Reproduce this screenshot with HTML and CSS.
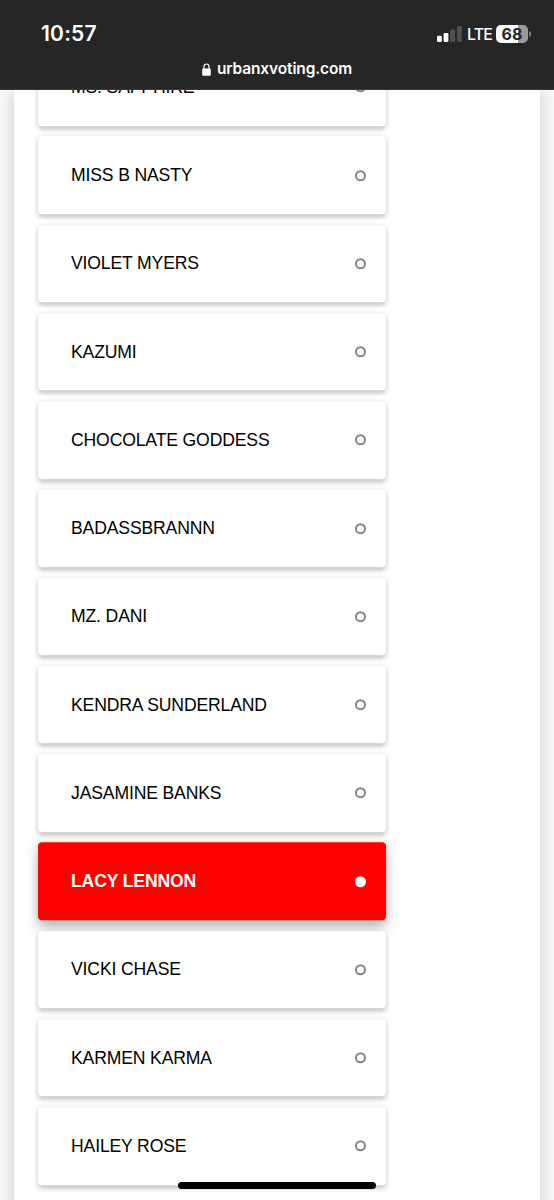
FILE: index.html
```html
<!DOCTYPE html>
<html lang="en">
<head>
<meta charset="utf-8">
<title>urbanxvoting.com</title>
<link rel="stylesheet" href="styles.css">
</head>
<body>
<div class="screen">
  <header class="browser-bar">
    <div class="status">
      <span class="time">10:57</span>
      <div class="indicators">
        <svg class="signal" width="25" height="16" viewBox="0 0 25 16"><rect x="0" y="9.7" width="4.8" height="6.3" rx="1.2" fill="#fff"/><rect x="6.6" y="7" width="4.8" height="9" rx="1.2" fill="#fff"/><rect x="13.2" y="3.5" width="4.8" height="12.5" rx="1.2" fill="#505050"/><rect x="20" y="0" width="4.8" height="16" rx="1.2" fill="#505050"/></svg>
        <span class="network">LTE</span>
        <span class="battery">68</span>
        <span class="battery-tip"></span>
      </div>
    </div>
    <div class="address">
      <svg class="lock" width="9" height="13" viewBox="0 0 9 13"><path d="M2 6V3.5a2.5 2.5 0 0 1 5 0V6" fill="none" stroke="#fff" stroke-width="1.2"/><rect x="0.2" y="5.5" width="8.6" height="7.2" rx="1.3" fill="#fff"/></svg>
      <span class="domain">urbanxvoting.com</span>
    </div>
  </header>
  <main class="page">
    <section class="panel">
      <ul class="choices">
        <li class="choice"><span class="name">MS. SAPPHIRE</span><span class="radio"></span></li>
        <li class="choice"><span class="name">MISS B NASTY</span><span class="radio"></span></li>
        <li class="choice"><span class="name">VIOLET MYERS</span><span class="radio"></span></li>
        <li class="choice"><span class="name">KAZUMI</span><span class="radio"></span></li>
        <li class="choice"><span class="name">CHOCOLATE GODDESS</span><span class="radio"></span></li>
        <li class="choice"><span class="name">BADASSBRANNN</span><span class="radio"></span></li>
        <li class="choice"><span class="name">MZ. DANI</span><span class="radio"></span></li>
        <li class="choice"><span class="name">KENDRA SUNDERLAND</span><span class="radio"></span></li>
        <li class="choice"><span class="name">JASAMINE BANKS</span><span class="radio"></span></li>
        <li class="choice selected"><span class="name">LACY LENNON</span><span class="radio"></span></li>
        <li class="choice"><span class="name">VICKI CHASE</span><span class="radio"></span></li>
        <li class="choice"><span class="name">KARMEN KARMA</span><span class="radio"></span></li>
        <li class="choice"><span class="name">HAILEY ROSE</span><span class="radio"></span></li>
      </ul>
    </section>
  </main>
  <div class="home-indicator"></div>
</div>
</body>
</html>
```
FILE: styles.css
```css
* { box-sizing: border-box; }
body { margin: 0; background: #fff; }
.screen {
  position: relative;
  display: flex;
  flex-direction: column;
  width: 554px;
  height: 1200px;
  overflow: hidden;
}
.browser-bar {
  flex: none;
  height: 90px;
  padding-top: 22px;
  background: #262626;
  border-bottom: 1px solid #3a3a3a;
  color: #fff;
  font-family: Inter, sans-serif;
}
.status {
  display: flex;
  align-items: center;
  justify-content: space-between;
  height: 23px;
  padding: 0 23px 0 41px;
}
.time { font-size: 21px; font-weight: 600; line-height: 23px; letter-spacing: 0.2px; }
.indicators { display: flex; align-items: center; }
.signal { margin-right: 5px; }
.network { width: 29px; font-size: 16px; font-weight: 500; letter-spacing: -0.9px; line-height: 22px; }
.battery {
  width: 32px;
  height: 18px;
  border-radius: 5px;
  background: linear-gradient(90deg, #fff 68%, #9a9a9a 68%);
  color: #262626;
  font-size: 16px;
  font-weight: 700;
  line-height: 18px;
  text-align: center;
}
.battery-tip { width: 2px; height: 6px; margin-left: 1px; border-radius: 0 2px 2px 0; background: #777; }
.address {
  display: flex;
  align-items: center;
  justify-content: center;
  gap: 6px;
  height: 20px;
  margin-top: 14px;
}
.domain { font-size: 15.5px; font-weight: 600; line-height: 20px; letter-spacing: -0.13px; }
.page {
  flex: 1;
  min-height: 0;
  padding: 0 14px;
  overflow: hidden;
  background: #fafafa;
}
.panel {
  height: 1200px;
  padding: 0 24px;
  background: #fff;
  box-shadow: 0 0 18px rgba(0, 0, 0, 0.2);
}
.choices {
  display: flex;
  flex-direction: column;
  gap: 10.75px;
  width: 348px;
  margin: 0;
  padding: 0;
  list-style: none;
  transform: translateY(-41.75px);
}
.choice {
  display: flex;
  align-items: center;
  justify-content: space-between;
  height: 77.5px;
  padding: 0 20px 0 33px;
  border-radius: 4px;
  background: #fff;
  box-shadow: 0 2px 5px rgba(0, 0, 0, 0.23), 0 2px 8px rgba(0, 0, 0, 0.04);
  color: #000;
  font: 17.6px/22px "Liberation Sans", Arial, sans-serif;
  letter-spacing: -0.15px;
}
.radio { width: 11px; height: 11px; border: 2px solid #858585; border-radius: 50%; }
.selected {
  background: #f00;
  box-shadow: 0 6px 14px rgba(0, 0, 0, 0.26), 0 3px 8px rgba(0, 0, 0, 0.08);
  color: #fff;
  font-weight: 700;
}
.selected .radio { border-color: #fff; background: #fff; }
.home-indicator {
  position: absolute;
  left: 178px;
  top: 1182px;
  width: 198px;
  height: 7px;
  border-radius: 4px;
  background: #000;
}
```
